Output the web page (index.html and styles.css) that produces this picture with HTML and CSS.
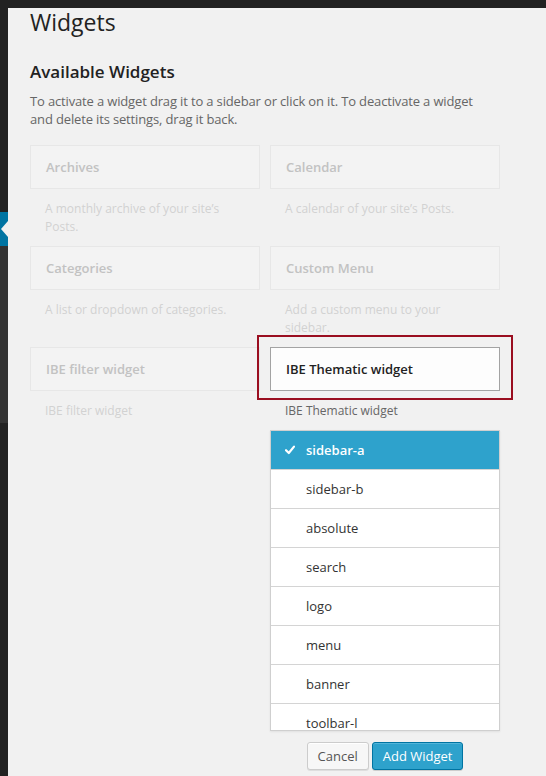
FILE: index.html
```html
<!DOCTYPE html>
<html lang="en">
<head>
<meta charset="utf-8">
<title>Widgets</title>
<link rel="stylesheet" href="styles.css">
</head>
<body>
<div class="adminbar"></div>
<div class="layout">
  <nav class="menu">
    <div class="menu-top"></div>
    <div class="menu-current"></div>
    <div class="menu-sub"></div>
  </nav>
  <main class="content">
    <h1 class="page-title">Widgets</h1>
    <h2 class="section-title">Available Widgets</h2>
    <p class="intro">To activate a widget drag it to a sidebar or click on it. To deactivate a widget and delete its settings, drag it back.</p>
    <div class="widget-grid">
      <div class="widget faded">
        <div class="widget-top"><h4 class="widget-title">Archives</h4></div>
        <div class="widget-desc">A monthly archive of your site’s Posts.</div>
      </div>
      <div class="widget faded">
        <div class="widget-top"><h4 class="widget-title">Calendar</h4></div>
        <div class="widget-desc">A calendar of your site’s Posts.</div>
      </div>
      <div class="widget faded">
        <div class="widget-top"><h4 class="widget-title">Categories</h4></div>
        <div class="widget-desc">A list or dropdown of categories.</div>
      </div>
      <div class="widget faded">
        <div class="widget-top"><h4 class="widget-title">Custom Menu</h4></div>
        <div class="widget-desc">Add a custom menu to your sidebar.</div>
      </div>
      <div class="widget faded">
        <div class="widget-top"><h4 class="widget-title">IBE filter widget</h4></div>
        <div class="widget-desc">IBE filter widget</div>
      </div>
      <div class="widget chosen">
        <div class="widget-top"><h4 class="widget-title">IBE Thematic widget</h4><span class="highlight"></span></div>
        <div class="widget-desc">IBE Thematic widget</div>
        <div class="chooser">
          <ul class="sidebars">
            <li class="selected"><svg class="check" width="10" height="10" viewBox="0 0 10 10"><path d="M1 5.2 L3.8 8 L9 1.6" fill="none" stroke="#fff" stroke-width="2.2" stroke-linecap="round" stroke-linejoin="round"/></svg>sidebar-a</li>
            <li>sidebar-b</li>
            <li>absolute</li>
            <li>search</li>
            <li>logo</li>
            <li>menu</li>
            <li>banner</li>
            <li>toolbar-l</li>
          </ul>
          <div class="actions">
            <button class="button">Cancel</button>
            <button class="button primary">Add Widget</button>
          </div>
        </div>
      </div>
    </div>
  </main>
</div>
</body>
</html>
```
FILE: styles.css
```css
html, body {
  margin: 0;
  padding: 0;
}
body {
  font-family: "Open Sans", "DejaVu Sans", sans-serif;
  font-size: 13px;
  background: #f1f1f1;
  color: #444;
  height: 776px;
  overflow: hidden;
}
.adminbar {
  height: 8px;
  background: #222;
}
.layout {
  display: flex;
  height: 768px;
}
.menu {
  width: 8px;
  flex: 0 0 8px;
  background: #222;
  display: flex;
  flex-direction: column;
}
.menu-top {
  height: 204px;
}
.menu-current {
  height: 34px;
  background: #0074a2;
  position: relative;
}
.menu-current::after {
  content: "";
  position: absolute;
  right: 0;
  top: 9px;
  width: 0;
  height: 0;
  border-top: 8px solid transparent;
  border-bottom: 8px solid transparent;
  border-right: 7px solid #f1f1f1;
}
.menu-sub {
  height: 177px;
  background: #333;
}
.content {
  flex: 1;
  padding-left: 22px;
}
.page-title {
  margin: 0;
  font-size: 23px;
  font-weight: 400;
  line-height: 29px;
  color: #222;
}
.section-title {
  margin: 23px 0 8px;
  font-size: 17px;
  font-weight: 600;
  line-height: 24px;
  color: #222;
}
.intro {
  margin: 0;
  width: 458px;
  line-height: 18px;
  letter-spacing: -0.15px;
  color: #666;
}
.widget-grid {
  margin-top: 17px;
  width: 470px;
  display: grid;
  grid-template-columns: 230px 230px;
  column-gap: 10px;
  align-items: start;
}
.widget-top {
  height: 42px;
  border: 1px solid;
  display: flex;
  align-items: center;
  padding: 0 15px;
  position: relative;
}
.widget-title {
  margin: 0;
  font-size: 13px;
  font-weight: 600;
}
.widget-desc {
  margin: 11px 0 10px;
  padding: 0 15px;
  font-size: 12px;
  line-height: 18px;
  min-height: 36px;
}
.faded .widget-top {
  border-color: #e7e7e7;
  background: #f3f3f3;
  color: #c2c2c2;
}
.faded .widget-desc {
  color: #d2d2d2;
}
.chosen .widget-top {
  border-color: #a3a3a3;
  background: #fdfdfd;
  color: #222;
}
.chosen .widget-desc {
  min-height: 0;
  margin-bottom: 10px;
  color: #666;
}
.highlight {
  position: absolute;
  top: -13px;
  left: -14px;
  right: -14px;
  bottom: -10px;
  border: 2px solid #9a0e20;
}
.sidebars {
  list-style: none;
  margin: 0;
  padding: 0;
  height: 299px;
  overflow: hidden;
  border: 1px solid #cfcfcf;
  background: #fff;
  box-shadow: 0 1px 2px rgba(0, 0, 0, 0.07);
}
.sidebars li {
  height: 38px;
  border-bottom: 1px solid #d4d4d4;
  display: flex;
  align-items: center;
  padding-left: 35px;
  color: #333;
}
.sidebars li.selected {
  background: #2ea2cc;
  color: #fff;
  font-weight: 600;
}
.check {
  flex: 0 0 10px;
  margin-left: -21px;
  margin-right: 11px;
}
.actions {
  display: flex;
  justify-content: center;
  gap: 3px;
  margin-top: 11px;
}
.button {
  box-sizing: border-box;
  height: 28px;
  margin: 0;
  padding: 0 10px;
  font-family: "Open Sans", "DejaVu Sans", sans-serif;
  font-size: 13px;
  line-height: 26px;
  border: 1px solid #ccc;
  border-radius: 3px;
  background: #f7f7f7;
  color: #555;
  box-shadow: inset 0 1px 0 #fff, 0 1px 0 rgba(0, 0, 0, 0.08);
}
.button.primary {
  background: #2ea2cc;
  border-color: #0074a2;
  color: #fff;
  box-shadow: inset 0 1px 0 rgba(120, 200, 230, 0.5), 0 1px 0 rgba(0, 0, 0, 0.15);
}
```
